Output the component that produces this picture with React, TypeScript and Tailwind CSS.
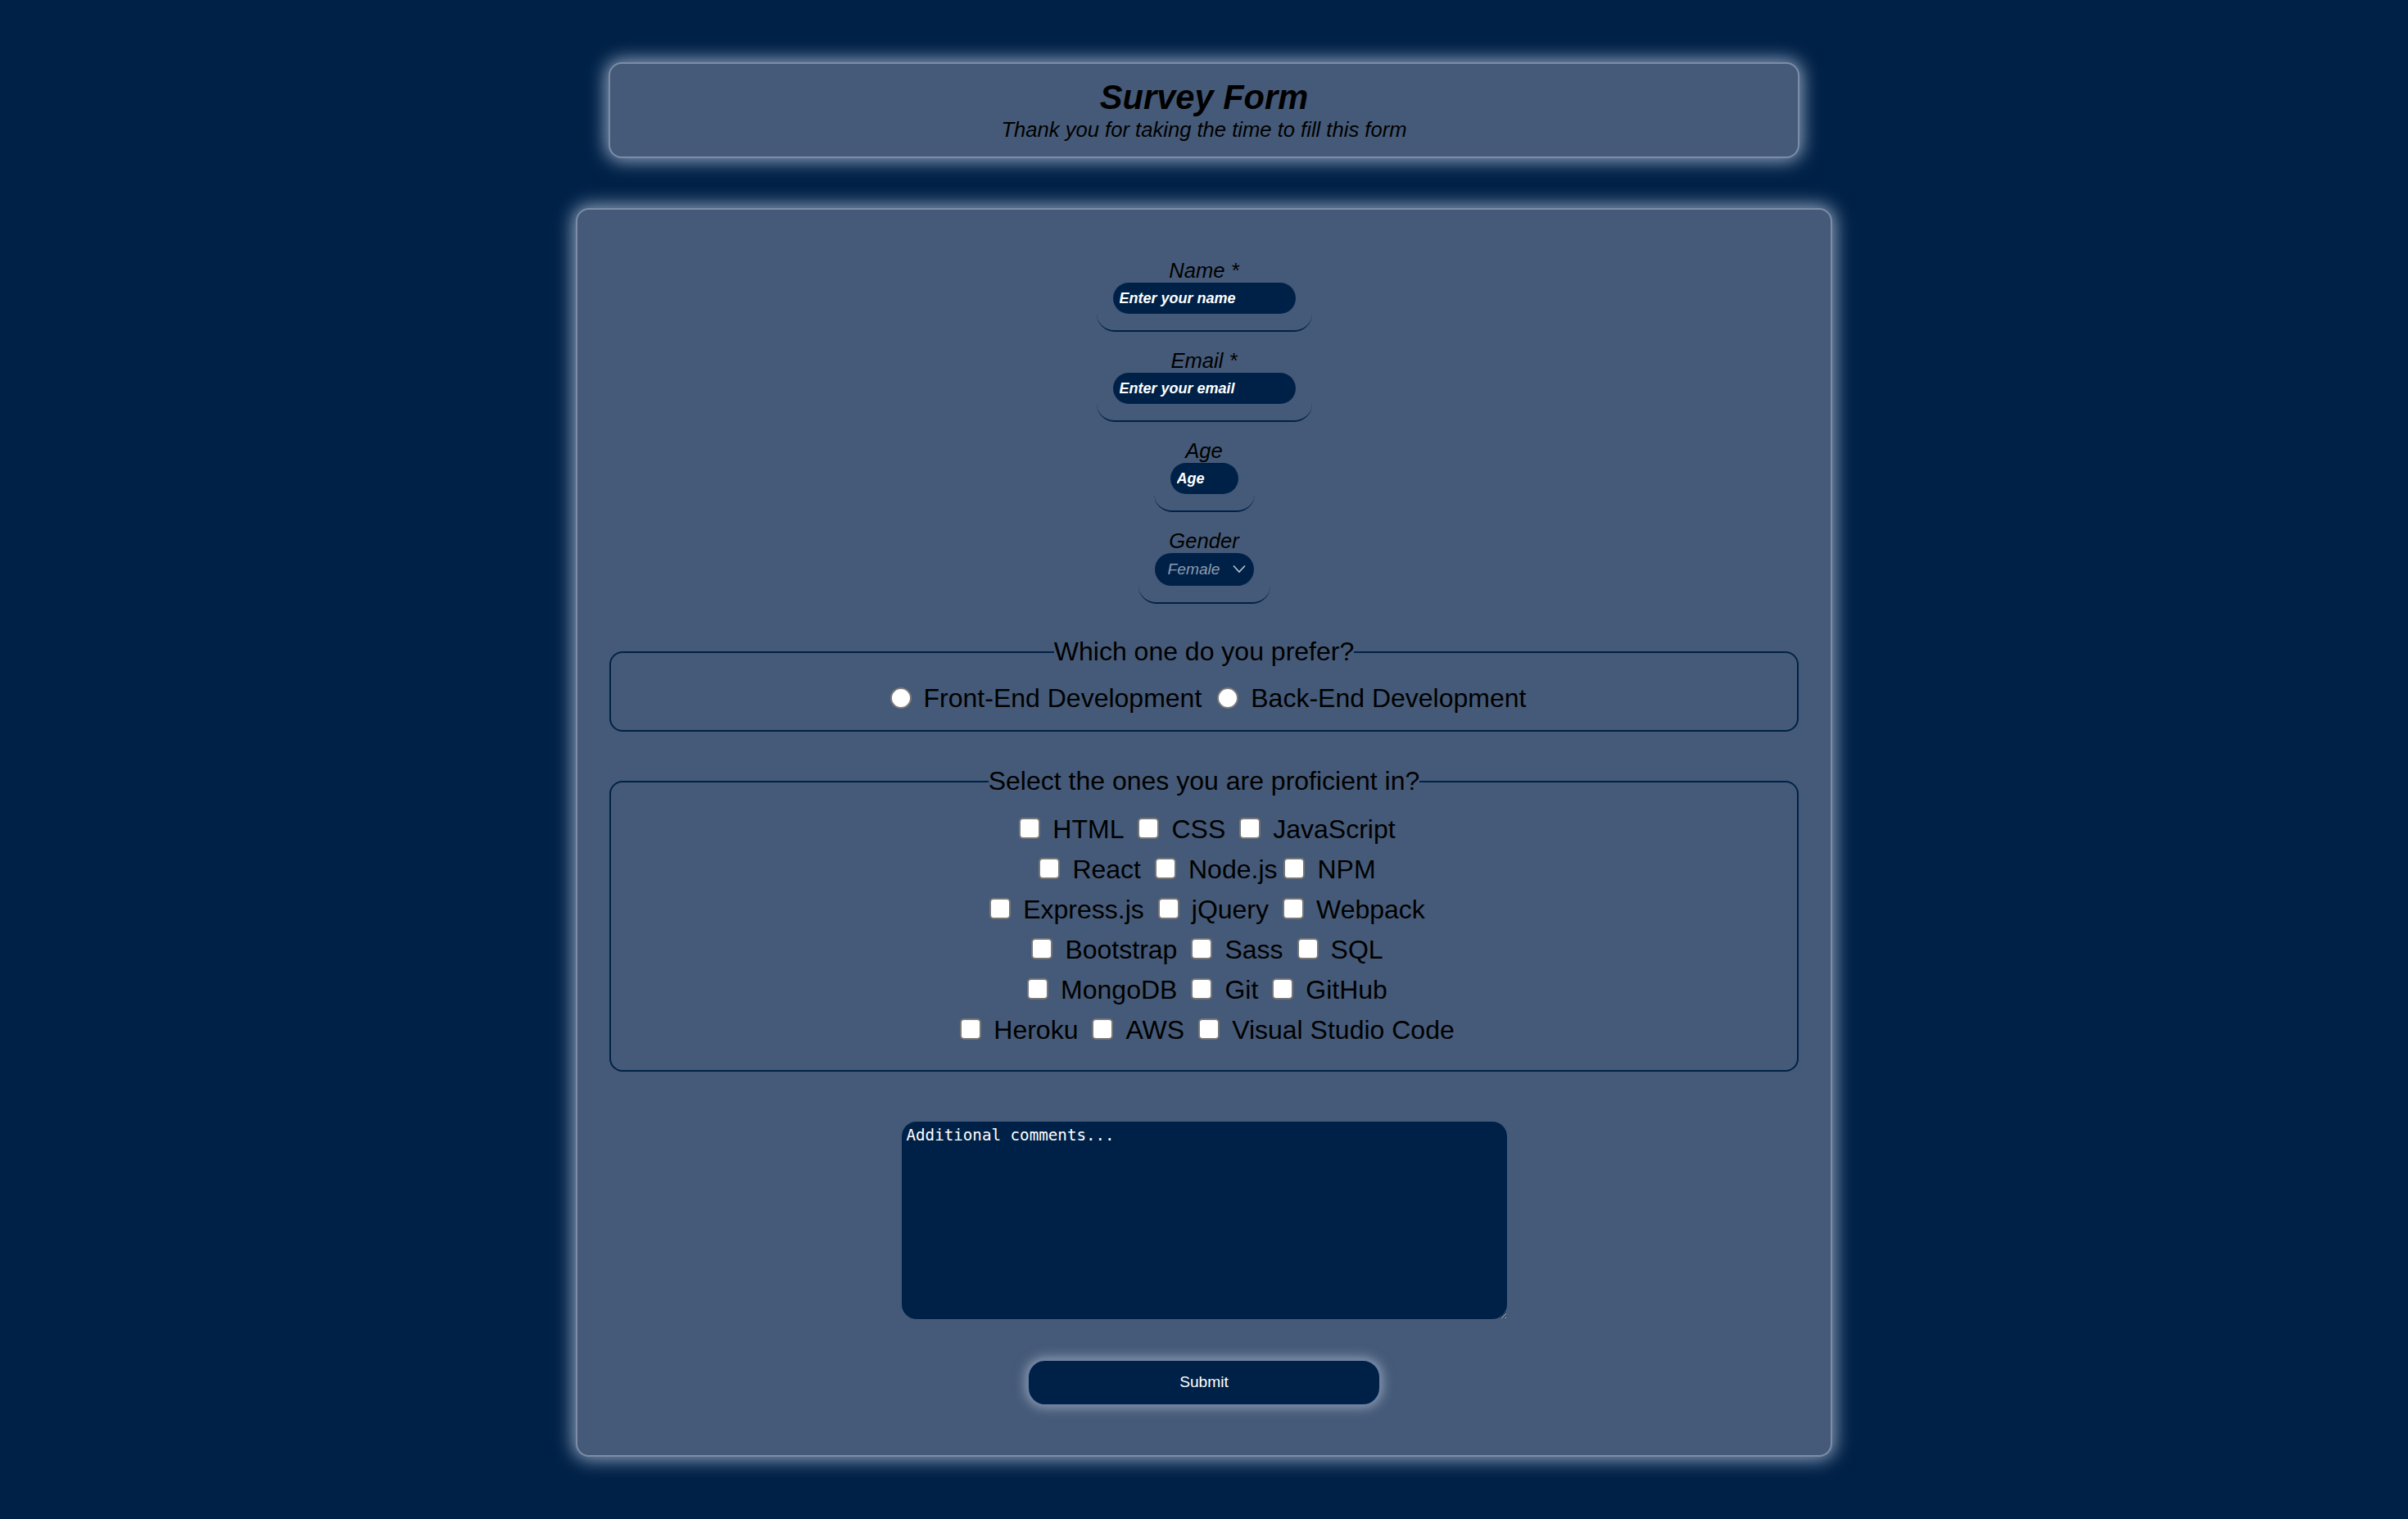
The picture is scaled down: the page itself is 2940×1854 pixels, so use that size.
import { useState } from "react";

type Skill = { label: string; tight?: boolean };

// rows of the proficiency fieldset, the same grouping as the page
const skillRows: Skill[][] = [
  [{ label: "HTML" }, { label: "CSS" }, { label: "JavaScript" }],
  [{ label: "React" }, { label: "Node.js", tight: true }, { label: "NPM" }],
  [{ label: "Express.js" }, { label: "jQuery" }, { label: "Webpack" }],
  [{ label: "Bootstrap" }, { label: "Sass" }, { label: "SQL" }],
  [{ label: "MongoDB" }, { label: "Git" }, { label: "GitHub" }],
  [{ label: "Heroku" }, { label: "AWS" }, { label: "Visual Studio Code" }],
];

function FieldGroup({ label, children }: { label: string; children: React.ReactNode }) {
  return (
    <div className="flex flex-col items-center px-[20px] pb-[20px] border-b-2 border-[#002147] rounded-[22px] mb-[20px]">
      <label className="text-[25.6px] italic leading-[30px]">{label}</label>
      {children}
    </div>
  );
}

function SkillCheck({ skill, index, prevTight }: { skill: Skill; index: number; prevTight: boolean }) {
  const [checked, setChecked] = useState(false);
  return (
    <span className="flex items-center">
      <input
        type="checkbox"
        checked={checked}
        onChange={() => setChecked(!checked)}
        className={
          index === 0 || prevTight
            ? "appearance-none w-[26px] h-[26px] shrink-0 rounded-[5px] border-2 border-[#767676] bg-white ml-[8px] mr-[15px] mb-[3px] checked:bg-[#0a66d8]"
            : "appearance-none w-[26px] h-[26px] shrink-0 rounded-[5px] border-2 border-[#767676] bg-white ml-[17px] mr-[15px] mb-[3px] checked:bg-[#0a66d8]"
        }
      />
      <span>{skill.label}</span>
    </span>
  );
}

export default function App() {
  const [pref, setPref] = useState("");

  return (
    <div className="min-h-screen bg-[#002147] pt-[76px] pb-[76px] font-['Liberation_Sans',Arial,sans-serif] text-black">
      <header className="mx-auto w-[1454px] h-[117px] rounded-[16px] bg-[#455a78] border-2 border-[#7d8da7] shadow-[0_0_22px_3px_rgba(185,200,222,0.8)] flex flex-col items-center justify-center">
        <h1 className="text-[41.6px] font-bold italic leading-[44px]">Survey Form</h1>
        <p className="text-[25.6px] italic leading-[29px] mt-[3px]">Thank you for taking the time to fill this form</p>
      </header>

      <form
        className="mx-auto mt-[61px] w-[1534px] rounded-[16px] bg-[#455a78] border-2 border-[#7d8da7] shadow-[0_0_22px_3px_rgba(185,200,222,0.8)] px-[39px] pt-[59px] pb-[60px] flex flex-col items-center"
        onSubmit={(e) => e.preventDefault()}
      >
        <FieldGroup label="Name *">
          <input
            type="text"
            placeholder="Enter your name"
            className="w-[223px] h-[38px] rounded-full bg-[#002147] px-[8px] text-[18px] font-bold italic text-white placeholder:text-white outline-none"
          />
        </FieldGroup>

        <FieldGroup label="Email *">
          <input
            type="email"
            placeholder="Enter your email"
            className="w-[223px] h-[38px] rounded-full bg-[#002147] px-[8px] text-[18px] font-bold italic text-white placeholder:text-white outline-none"
          />
        </FieldGroup>

        <FieldGroup label="Age">
          <input
            type="number"
            placeholder="Age"
            className="w-[83px] h-[38px] rounded-full bg-[#002147] px-[8px] text-[18px] font-bold italic text-white placeholder:text-white outline-none [appearance:textfield]"
          />
        </FieldGroup>

        <FieldGroup label="Gender">
          <div className="relative">
            <select
              defaultValue="Female"
              className="appearance-none w-[121px] h-[40px] rounded-full bg-[#002147] pl-[16px] pr-[30px] text-[19.2px] italic text-[#8d9bb1] outline-none"
            >
              <option>Male</option>
              <option>Female</option>
              <option>Other</option>
            </select>
            <svg
              className="pointer-events-none absolute right-[10px] top-[14px]"
              width="16"
              height="11"
              viewBox="0 0 16 11"
              fill="none"
            >
              <path d="M1 1.5 L8 9 L15 1.5" stroke="#b9c3d1" strokeWidth="1.6" />
            </svg>
          </div>
        </FieldGroup>

        <fieldset className="w-full mt-[20px] border-2 border-[#002147] rounded-[16px] pt-[20px] pb-[20px] text-[32px] leading-[37px]">
          <legend className="mx-auto px-0">Which one do you prefer?</legend>
          <div className="flex justify-center items-center h-[37px]">
            <input
              type="radio"
              name="pref"
              checked={pref === "front"}
              onChange={() => setPref("front")}
              className="appearance-none w-[26px] h-[26px] shrink-0 rounded-full border-2 border-[#7a7a7a] bg-white ml-[10px] mr-[15px] mb-[2px] checked:border-[8px] checked:border-[#0a66d8]"
            />
            <span>Front-End Development</span>
            <input
              type="radio"
              name="pref"
              checked={pref === "back"}
              onChange={() => setPref("back")}
              className="appearance-none w-[26px] h-[26px] shrink-0 rounded-full border-2 border-[#7a7a7a] bg-white ml-[19px] mr-[15px] mb-[2px] checked:border-[8px] checked:border-[#0a66d8]"
            />
            <span>Back-End Development</span>
          </div>
        </fieldset>

        <fieldset className="w-full mt-[42px] border-2 border-[#002147] rounded-[16px] pt-[16px] pb-[24px] text-[32px] leading-[37px]">
          <legend className="mx-auto px-0">Select the ones you are proficient in?</legend>
          {skillRows.map((row, r) => (
            <div key={r} className="flex justify-center items-center h-[49px]">
              {row.map((skill, i) => (
                <SkillCheck key={skill.label} skill={skill} index={i} prevTight={i > 0 && !!row[i - 1].tight} />
              ))}
            </div>
          ))}
        </fieldset>

        <textarea
          placeholder="Additional comments..."
          className="mt-[61px] w-[739px] h-[241px] rounded-[18px] bg-[#002147] p-[6px] font-['DejaVu_Sans_Mono',monospace] text-[19.2px] leading-[22px] text-white placeholder:text-white outline-none [color-scheme:dark]"
        />

        <button
          type="submit"
          className="mt-[49px] w-[432px] h-[57px] rounded-[22px] bg-[#002147] border-2 border-[#6f80a0] shadow-[0_0_14px_2px_rgba(185,200,222,0.6)] text-[19.2px] text-white"
        >
          Submit
        </button>
      </form>
    </div>
  );
}
